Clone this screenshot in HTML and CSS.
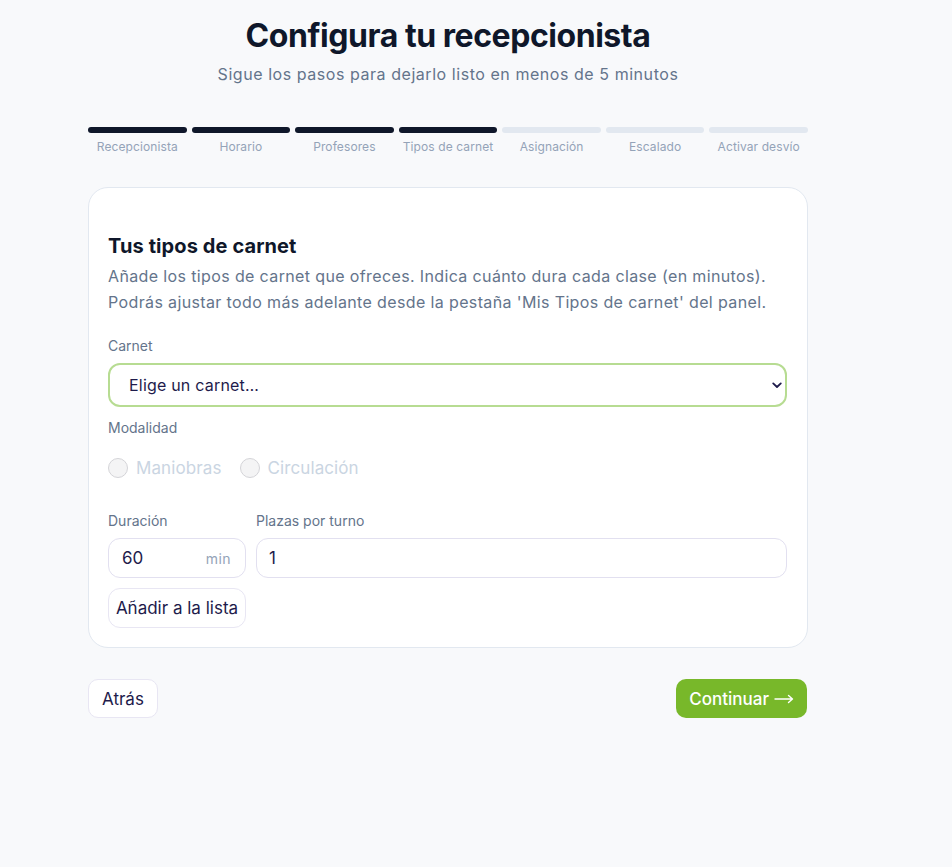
FILE: index.html
```html
<!DOCTYPE html>
<html lang="es">
<head>
<meta charset="utf-8">
<title>Configura tu recepcionista</title>
<link rel="stylesheet" href="styles.css">
</head>
<body>
<main class="wizard">
  <header class="intro">
    <h1 class="title">Configura tu recepcionista</h1>
    <p class="subtitle">Sigue los pasos para dejarlo listo en menos de 5 minutos</p>
  </header>

  <ol class="steps">
    <li class="step done"><span class="bar"></span><span class="step-label">Recepcionista</span></li>
    <li class="step done"><span class="bar"></span><span class="step-label">Horario</span></li>
    <li class="step done"><span class="bar"></span><span class="step-label">Profesores</span></li>
    <li class="step done"><span class="bar"></span><span class="step-label">Tipos de carnet</span></li>
    <li class="step"><span class="bar"></span><span class="step-label">Asignación</span></li>
    <li class="step"><span class="bar"></span><span class="step-label">Escalado</span></li>
    <li class="step"><span class="bar"></span><span class="step-label">Activar desvío</span></li>
  </ol>

  <section class="card">
    <h2 class="card-title">Tus tipos de carnet</h2>
    <p class="card-desc">Añade los tipos de carnet que ofreces. Indica cuánto dura cada clase (en minutos). Podrás ajustar todo más adelante desde la pestaña 'Mis Tipos de carnet' del panel.</p>

    <label class="field-label label-carnet">Carnet</label>
    <div class="select-wrap">
      <div class="select">Elige un carnet…</div>
      <svg class="chevron" width="14" height="14" viewBox="0 0 14 14" aria-hidden="true"><path d="M3.2 5.4 L7 9 L10.8 5.4" fill="none" stroke="#1e1b4b" stroke-width="1.8" stroke-linecap="round" stroke-linejoin="round"/></svg>
    </div>

    <label class="field-label label-mod">Modalidad</label>
    <div class="radios">
      <span class="radio"><span class="dot"></span>Maniobras</span>
      <span class="radio"><span class="dot"></span>Circulación</span>
    </div>

    <div class="row">
      <div class="col col-dur">
        <label class="field-label">Duración</label>
        <div class="input input-dur"><span>60</span><span class="unit">min</span></div>
      </div>
      <div class="col col-plazas">
        <label class="field-label">Plazas por turno</label>
        <div class="input">1</div>
      </div>
    </div>
    <button class="btn-add">Añadir a la lista</button>
  </section>

  <footer class="actions">
    <button class="btn-back">Atrás</button>
    <button class="btn-next">Continuar<svg class="arrow" width="20" height="10" viewBox="0 0 20 10" aria-hidden="true"><path d="M1 5 H18.5 M14.5 1.5 L18.5 5 L14.5 8.5" fill="none" stroke="#fff" stroke-width="1.4" stroke-linecap="round" stroke-linejoin="round"/></svg></button>
  </footer>
</main>
</body>
</html>
```

FILE: styles.css
```css
* { box-sizing: border-box; }
html, body { margin: 0; padding: 0; }
body {
  background: #f8f9fb;
  font-family: Inter, "Noto Sans", "Liberation Sans", sans-serif;
  color: #1e1b4b;
  height: 867px;
}
.wizard {
  width: 720px;
  margin-left: 88px;
  padding-top: 16px;
}
.intro { text-align: center; }
.title {
  margin: 0;
  font-size: 32px;
  line-height: 40px;
  font-weight: 700;
  color: #0f172a;
  letter-spacing: -0.45px;
}
.subtitle {
  margin: 6px 0 0;
  font-size: 16px;
  line-height: 24px;
  color: #64748b;
  letter-spacing: 0.55px;
}
.steps {
  list-style: none;
  margin: 41px 0 0;
  padding: 0;
  display: grid;
  grid-template-columns: repeat(7, 1fr);
  gap: 5px;
}
.step { display: flex; flex-direction: column; align-items: center; gap: 6px; }
.bar { display: block; width: 100%; height: 6px; border-radius: 3px; background: #e2e8f0; }
.step.done .bar { background: #0f172a; }
.step-label { font-size: 12px; line-height: 16px; color: #94a3b8; letter-spacing: 0.1px; }

.card {
  margin-top: 32px;
  background: #fff;
  border: 1px solid #e2e8f0;
  border-radius: 20px;
  padding: 44px 20px 19px 19px;
}
.card-title {
  margin: 0;
  font-size: 20px;
  line-height: 28px;
  font-weight: 700;
  color: #0f172a;
  letter-spacing: 0.1px;
}
.card-desc {
  margin: 3px 0 0;
  font-size: 16px;
  line-height: 26px;
  color: #64748b;
  letter-spacing: 0.37px;
}
.field-label {
  display: block;
  font-size: 14px;
  line-height: 20px;
  color: #64748b;
  margin-bottom: 7px;
}
.label-carnet { margin-top: 21px; }
.select-wrap { position: relative; }
.select {
  height: 44px;
  border: 2px solid #b7dc92;
  border-radius: 12px;
  padding: 0 19px;
  display: flex;
  align-items: center;
  font-size: 16px;
  letter-spacing: 0.2px;
  color: #1e1b4b;
}
.chevron { position: absolute; right: 3px; top: 15px; }
.label-mod { margin-top: 11px; margin-bottom: 16px; }
.radios { display: flex; gap: 18px; height: 28px; align-items: center; }
.radio {
  display: flex;
  align-items: center;
  gap: 8px;
  font-size: 17px;
  letter-spacing: 0.1px;
  color: #cad5e2;
}
.dot {
  width: 20px;
  height: 20px;
  border-radius: 50%;
  border: 1px solid #d4d4d8;
  background: #f4f4f5;
}
.row { display: flex; gap: 10px; margin-top: 29px; }
.col-dur { width: 138px; }
.col-plazas { flex: 1; }
.input {
  height: 40px;
  border: 1px solid #e2e0f0;
  border-radius: 12px;
  padding: 0 12px;
  display: flex;
  align-items: center;
  font-size: 17px;
  color: #1e1b4b;
}
.input-dur { justify-content: space-between; padding: 0 14px 0 13px; }
.unit { font-size: 14px; color: #94a3b8; letter-spacing: 0.4px; }
.btn-add {
  margin-top: 10px;
  width: 138px;
  height: 40px;
  border: 1px solid #e8e6f3;
  border-radius: 12px;
  background: #fff;
  font-family: inherit;
  font-size: 17px;
  color: #1e1b4b;
  padding: 0;
}
.actions {
  margin-top: 31px;
  display: flex;
  justify-content: space-between;
}
.btn-back, .btn-next {
  height: 39px;
  border-radius: 10px;
  font-family: inherit;
  font-size: 17px;
  padding: 0 13px;
}
.btn-back {
  background: #fff;
  border: 1px solid #e8e6f3;
  color: #1e1b4b;
}
.btn-next {
  display: flex;
  align-items: center;
  gap: 5px;
  background: #78b82a;
  border: none;
  color: #fff;
  font-weight: 500;
  margin-right: 1px;
}
.arrow { display: block; margin-top: 1px; }
```
